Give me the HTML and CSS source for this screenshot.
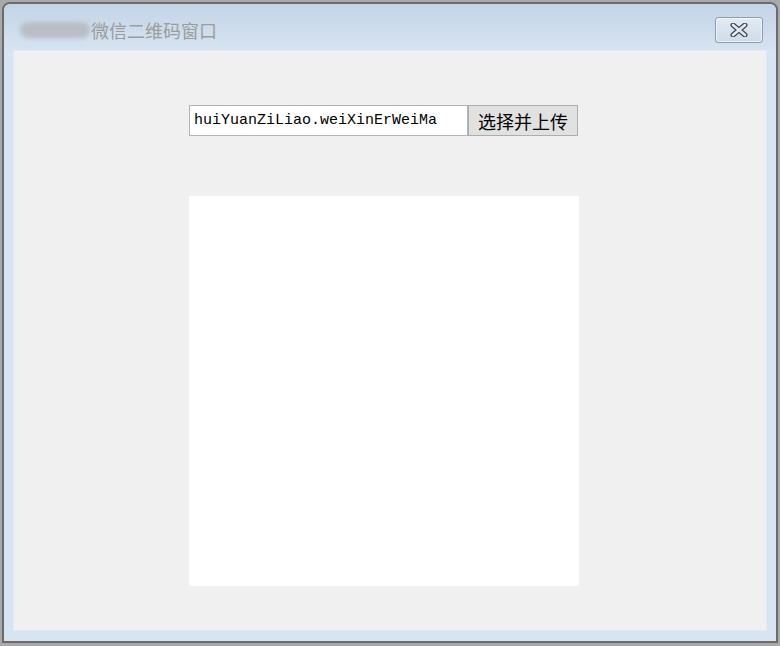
FILE: index.html
```html
<!DOCTYPE html>
<html lang="zh-CN">
<head>
  <meta charset="UTF-8">
  <title>微信二维码窗口</title>
  <link rel="stylesheet" href="styles.css">
</head>
<body>
  <div class="window">
    <div class="titlebar">
      <span class="title-blur"></span>
      <span class="title-text">微信二维码窗口</span>
      <button class="close-btn" aria-label="关闭">
        <svg width="20" height="14" viewBox="0 0 20 14">
          <path d="M4 2 L16 12 M16 2 L4 12" stroke="#3d4652" stroke-width="5" stroke-linecap="round"/>
          <path d="M4 2 L16 12 M16 2 L4 12" stroke="#e6ebf1" stroke-width="2.6" stroke-linecap="round"/>
        </svg>
      </button>
    </div>
    <div class="client">
      <div class="upload-row">
        <input class="file-name" type="text" value="huiYuanZiLiao.weiXinErWeiMa">
        <button class="upload-btn">选择并上传</button>
      </div>
      <div class="qr-box"></div>
    </div>
  </div>
</body>
</html>
```

FILE: styles.css
```css
* {
  margin: 0;
  padding: 0;
  box-sizing: border-box;
}

body {
  background-color: #a9a9a9;
  padding: 2px 0 0 2px;
  font-family: "Noto Sans CJK SC", sans-serif;
}

.window {
  width: 776px;
  height: 641px;
  border: 2px solid #6c6c6c;
  border-radius: 8px 8px 0 0;
  background-color: #d7e4f2;
  display: flex;
  flex-direction: column;
}

.titlebar {
  height: 46px;
  display: flex;
  align-items: center;
  padding: 5px 13px 0 16px;
  background: linear-gradient(to bottom, #c3d4e7, #d6e3f1);
  border-radius: 6px 6px 0 0;
}

.title-blur {
  width: 70px;
  height: 16px;
  border-radius: 8px;
  background-color: #b9bec4;
  filter: blur(2px);
}

.title-text {
  font-size: 18px;
  color: #9c9c9c;
  line-height: 1;
  margin-left: 1px;
}

.close-btn {
  margin-left: auto;
  width: 48px;
  height: 26px;
  border: 1px solid #8b9bb0;
  border-radius: 3px;
  background: linear-gradient(to bottom, #e3ebf4, #cfdbe8);
  box-shadow: inset 0 0 0 1px rgba(255, 255, 255, 0.6);
  display: flex;
  align-items: center;
  justify-content: center;
}

.client {
  flex: 1;
  margin: 0 9px 10px 9px;
  background-color: #f0f0f0;
  border: 1px solid #e2ebf5;
  padding: 54px 0 0 175px;
}

.upload-row {
  display: flex;
  height: 31px;
}

.file-name {
  width: 279px;
  height: 31px;
  border: 1px solid #b4b4b4;
  background-color: #fff;
  padding: 0 4px;
  font-family: "Liberation Mono", monospace;
  font-size: 15px;
  color: #000;
}

.upload-btn {
  width: 110px;
  height: 31px;
  border: 1px solid #adadad;
  background-color: #e1e1e1;
  font-family: "Noto Sans CJK SC", sans-serif;
  font-size: 18px;
  color: #000;
}

.qr-box {
  margin-top: 60px;
  width: 390px;
  height: 390px;
  background-color: #fff;
}
```
